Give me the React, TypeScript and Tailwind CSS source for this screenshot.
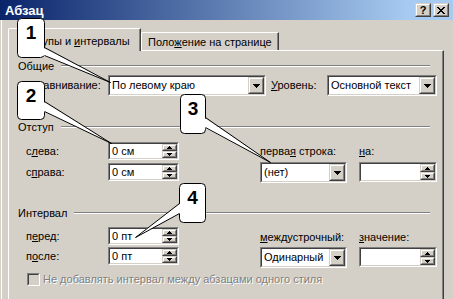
import React from 'react'

type Kids = { className?: string; children?: React.ReactNode }

function Sunken({ className = '', children }: Kids) {
  return (
    <div className={`border border-t-[#808080] border-l-[#808080] border-r-white border-b-white ${className}`}>
      <div className="flex h-full items-center border border-t-[#404040] border-l-[#404040] border-r-[#D4D0C8] border-b-[#D4D0C8] bg-white">
        {children}
      </div>
    </div>
  )
}

function Raised({ className = '', children }: Kids) {
  return (
    <div className={`border border-t-[#D4D0C8] border-l-[#D4D0C8] border-r-[#404040] border-b-[#404040] ${className}`}>
      <div className="flex h-full items-center justify-center border border-t-white border-l-white border-r-[#808080] border-b-[#808080] bg-[#D4D0C8]">
        {children}
      </div>
    </div>
  )
}

const DownArrow = () => (
  <svg width="7" height="4" shapeRendering="crispEdges">
    <path d="M0 0h7v1h-1v1h-1v1h-1v1h-1v-1h-1v-1h-1v-1h-1z" fill="black" />
  </svg>
)
const UpSmall = () => (
  <svg width="5" height="3" shapeRendering="crispEdges">
    <path d="M2 0h1v1h1v1h1v1h-5v-1h1v-1h1z" fill="black" />
  </svg>
)
const DownSmall = () => (
  <svg width="5" height="3" shapeRendering="crispEdges">
    <path d="M0 0h5v1h-1v1h-1v1h-1v-1h-1v-1h-1z" fill="black" />
  </svg>
)

function Combo({ value, className = '' }: { value: string; className?: string }) {
  return (
    <Sunken className={className}>
      <span className="flex-1 overflow-hidden whitespace-nowrap pl-[2px]">{value}</span>
      <Raised className="h-full w-[16px] shrink-0">
        <DownArrow />
      </Raised>
    </Sunken>
  )
}

function Spin({ value, className = '' }: { value: string; className?: string }) {
  return (
    <Sunken className={className}>
      <span className="flex-1 whitespace-nowrap pl-[2px]">{value}</span>
      <div className="flex h-full w-[15px] shrink-0 flex-col">
        <Raised className="flex-1">
          <UpSmall />
        </Raised>
        <Raised className="flex-1">
          <DownSmall />
        </Raised>
      </div>
    </Sunken>
  )
}

function Group({ title, className = '' }: { title: string; className?: string }) {
  return (
    <div className={`mr-[7px] flex h-[14px] items-center gap-[7px] ${className}`}>
      <span>{title}</span>
      <div className="h-[2px] flex-1 border-t border-t-[#808080] border-b border-b-white" />
    </div>
  )
}

const closeRows = ['11....11', '.11..11.', '..1111..', '...11...', '..1111..', '.11..11.', '11....11']

const callouts = [
  { n: '1', x: 17, y: 18, w: 27, h: 39, a: [44, 47], b: [44, 55], tip: [110, 82], side: -1 },
  { n: '2', x: 17, y: 81, w: 27, h: 38, a: [44, 101], b: [44, 111], tip: [111, 143], side: -1 },
  { n: '3', x: 180, y: 94, w: 25, h: 39, a: [205, 117], b: [205, 127], tip: [270, 162], side: -1 },
  { n: '4', x: 179, y: 183, w: 26, h: 39, a: [179, 203], b: [179, 213], tip: [135, 237], side: 1 },
]

function Callouts() {
  return (
    <svg className="pointer-events-none absolute left-0 top-0 z-20" width={453} height={299}>
      {callouts.map(c => (
        <g key={c.n}>
          <rect x={c.x + 0.5} y={c.y + 0.5} width={c.w} height={c.h} rx={4} fill="white" stroke="black" />
          <polygon
            points={`${c.a[0] + c.side * 2},${c.a[1]} ${c.b[0] + c.side * 2},${c.b[1]} ${c.tip[0]},${c.tip[1]}`}
            fill="white"
          />
          <line x1={c.a[0] + 0.5} y1={c.a[1] + 0.5} x2={c.tip[0] + 0.5} y2={c.tip[1] + 0.5} stroke="black" />
          <line x1={c.b[0] + 0.5} y1={c.b[1] + 0.5} x2={c.tip[0] + 0.5} y2={c.tip[1] + 0.5} stroke="black" />
          <text
            x={c.x + c.w / 2 + 0.5}
            y={c.y + 21}
            textAnchor="middle"
            fontFamily="'Liberation Sans', Arial, sans-serif"
            fontWeight="bold"
            fontSize={19}
          >
            {c.n}
          </text>
        </g>
      ))}
    </svg>
  )
}

export default function App() {
  return (
    <div className="relative flex h-[299px] w-[453px] flex-col overflow-hidden bg-[#D4D0C8] font-['Liberation_Sans',Arial,sans-serif] text-[11px] leading-[13px] text-black">
      {/* title bar */}
      <div className="flex h-[20px] shrink-0 items-center bg-[linear-gradient(to_right,#0A246A_0%,#A6CAF0_90%)] pl-[5px] pr-[4px]">
        <span className="flex-1 text-[13px] font-bold text-white">Абзац</span>
        <div className="flex gap-[2px]">
          <Raised className="h-[14px] w-[16px]">
            <span className="text-[11px] font-bold leading-[10px]">?</span>
          </Raised>
          <Raised className="h-[14px] w-[16px]">
            <svg width="8" height="7" shapeRendering="crispEdges">
              {closeRows.map((row, y) =>
                row.split('').map((ch, x) => (ch === '1' ? <rect key={`${x}-${y}`} x={x} y={y} width={1} height={1} fill="black" /> : null))
              )}
            </svg>
          </Raised>
        </div>
      </div>

      {/* window body */}
      <div className="ml-[1px] flex flex-1 flex-col border-l border-l-white">
        {/* tabs */}
        <div className="relative z-10 ml-[6px] mt-[8px] flex h-[22px] items-end">
          <div className="-mb-[1px] h-[23px] w-[133px] rounded-tl-[2px] border-l border-t border-r border-l-white border-t-white border-r-[#404040] bg-[#D4D0C8]">
            <div className="h-full border-r border-r-[#808080] pt-[6px] text-center">
              Отступы и <u>и</u>нтервалы
            </div>
          </div>
          <div className="h-[18px] w-[138px] rounded-tl-[2px] border-l border-t border-r border-l-white border-t-white border-r-[#404040]">
            <div className="h-full border-r border-r-[#808080] pt-[3px] pl-[6px]">
              Поло<u>ж</u>ение на странице
            </div>
          </div>
        </div>

        {/* panel */}
        <div className="ml-[6px] mr-[9px] flex-1 border-l border-t border-r border-l-white border-t-white border-r-[#404040]">
          <div className="h-full border-r border-r-[#808080] pl-[9px] pr-[5px] pt-[8px]">
            <Group title="Общие" />
            <div className="mt-[2px] flex items-center">
              <span className="w-[90px] pl-[4px]">
                <u>В</u>ыравнивание:
              </span>
              <Combo value="По левому краю" className="h-[21px] w-[158px]" />
              <span className="ml-[5px] w-[56px]">
                <u>У</u>ровень:
              </span>
              <Combo value="Основной текст" className="h-[21px] w-[110px]" />
            </div>

            <Group title="Отступ" className="mt-[24px]" />
            <div className="mt-[8px] flex">
              <div className="flex flex-col gap-[3px]">
                <div className="flex items-center">
                  <span className="w-[90px] pl-[8px]">
                    с<u>л</u>ева:
                  </span>
                  <Spin value="0 см" className="h-[18px] w-[71px]" />
                </div>
                <div className="flex items-center">
                  <span className="w-[90px] pl-[8px]">
                    с<u>п</u>рава:
                  </span>
                  <Spin value="0 см" className="h-[18px] w-[71px]" />
                </div>
              </div>
              <div className="ml-[81px] flex w-[87px] flex-col">
                <span className="mt-[3px] h-[14px] whitespace-nowrap">
                  перва<u>я</u> строка:
                </span>
                <Combo value="(нет)" className="mt-[3px] h-[21px] w-[87px]" />
              </div>
              <div className="ml-[12px] flex w-[78px] flex-col">
                <span className="mt-[3px] h-[14px]">
                  <u>н</u>а:
                </span>
                <Spin value="" className="mt-[3px] h-[20px] w-[78px]" />
              </div>
            </div>

            <Group title="Интервал" className="mt-[23px]" />
            <div className="mt-[7px] flex">
              <div className="flex flex-col gap-[2px]">
                <div className="flex items-center">
                  <span className="w-[90px] pl-[8px]">
                    п<u>е</u>ред:
                  </span>
                  <Spin value="0 пт" className="h-[18px] w-[71px]" />
                </div>
                <div className="flex items-center">
                  <span className="w-[90px] pl-[8px]">
                    п<u>о</u>сле:
                  </span>
                  <Spin value="0 пт" className="h-[18px] w-[71px]" />
                </div>
              </div>
              <div className="ml-[81px] flex w-[87px] flex-col">
                <span className="mt-[4px] h-[14px] whitespace-nowrap">
                  <u>м</u>еждустрочный:
                </span>
                <Combo value="Одинарный" className="mt-[2px] h-[21px] w-[87px]" />
              </div>
              <div className="ml-[12px] flex w-[78px] flex-col">
                <span className="mt-[4px] h-[14px]">
                  <u>з</u>начение:
                </span>
                <Spin value="" className="mt-[2px] h-[20px] w-[78px]" />
              </div>
            </div>

            <div className="mt-[5px] flex items-center pl-[9px]">
              <div className="h-[13px] w-[13px] border border-t-[#808080] border-l-[#808080] border-r-white border-b-white">
                <div className="h-full border border-t-[#404040] border-l-[#404040] border-r-[#D4D0C8] border-b-[#D4D0C8] bg-[#D4D0C8]" />
              </div>
              <span className="ml-[3px] whitespace-nowrap text-[#808080] [text-shadow:1px_1px_0_#fff]">
                Не добавлять интервал между абзацами одного стиля
              </span>
            </div>
          </div>
        </div>
      </div>

      <Callouts />
    </div>
  )
}
